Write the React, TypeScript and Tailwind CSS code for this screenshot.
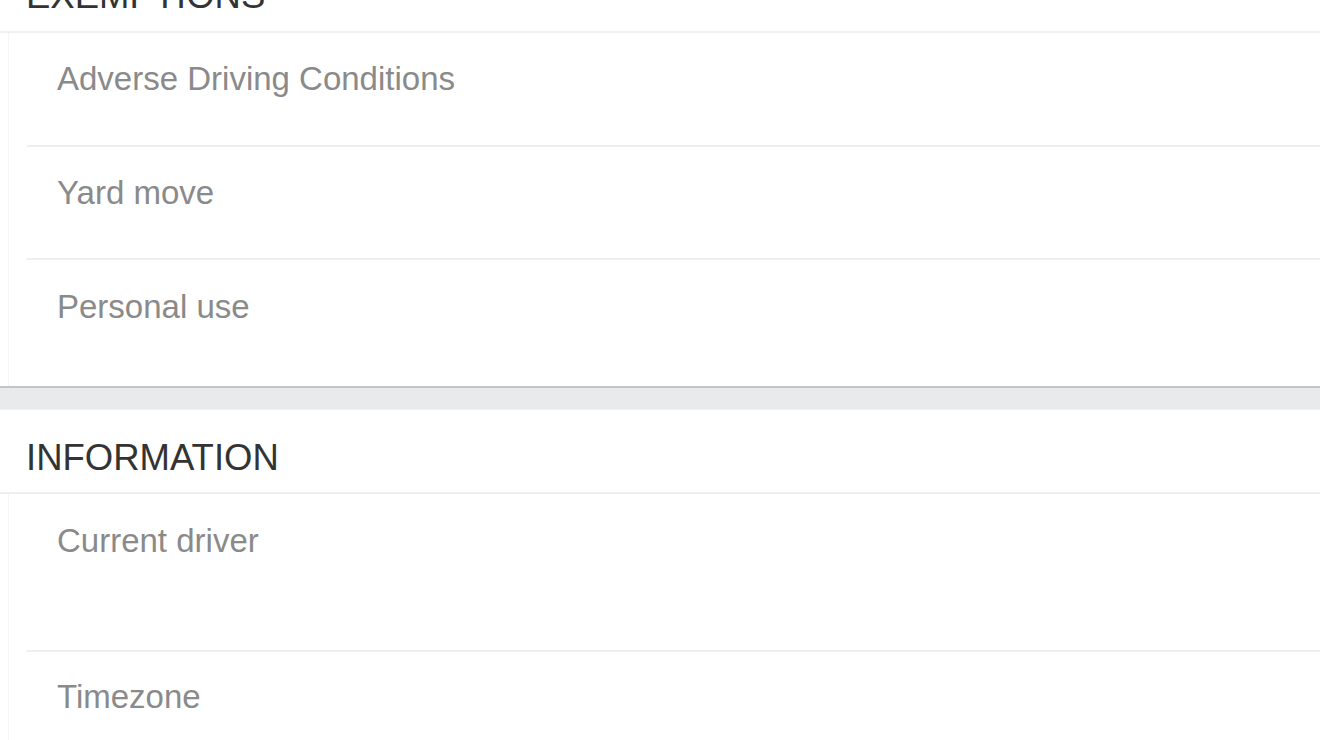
import React from "react";

function Row({ label, h, pt, divider = true }: { label: string; h: string; pt: string; divider?: boolean }) {
  return (
    <div className={`${h} flex flex-col`}>
      <div className={`flex-1 ${pt} pl-[48px] text-[33px] leading-[40px] text-[#8a8a8a]`}>{label}</div>
      {divider ? <div className="ml-[18px] h-[2px] bg-[#efefef]" /> : null}
    </div>
  );
}

export default function App() {
  return (
    <div className="w-[1320px] h-[740px] overflow-hidden bg-white font-['Liberation_Sans',Arial,sans-serif]">
      <div className="-mt-[51px]">
        <div className="h-[84px] pt-[27px] pl-[26px] border-b-2 border-[#efefef] text-[36.5px] leading-[40px] text-[#333333]">
          EXEMPTIONS
        </div>
        <div className="ml-[8px] border-l border-[#f5f5f5]">
          <Row label="Adverse Driving Conditions" h="h-[114px]" pt="pt-[26px]" />
          <Row label="Yard move" h="h-[113px]" pt="pt-[26px]" />
          <Row label="Personal use" h="h-[126px]" pt="pt-[27px]" divider={false} />
        </div>
        <div className="h-[2px] bg-[#c4c4c4]" />
        <div className="h-[22px] bg-[#e9eaec] border-b border-[#f0f0f2]" />
        <div className="h-[84px] pt-[28px] pl-[26px] border-b-2 border-[#efefef] text-[36.5px] leading-[40px] text-[#333333]">
          INFORMATION
        </div>
        <div className="ml-[8px] border-l border-[#f5f5f5]">
          <Row label="Current driver" h="h-[158px]" pt="pt-[27px]" />
          <Row label="Timezone" h="h-[140px]" pt="pt-[25px]" divider={false} />
        </div>
      </div>
    </div>
  );
}
